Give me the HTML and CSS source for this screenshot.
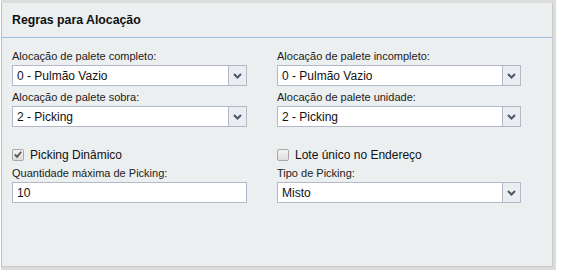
FILE: index.html
```html
<!DOCTYPE html>
<html>
<head>
<meta charset="utf-8">
<link rel="stylesheet" href="styles.css">
</head>
<body>
<div class="frame">
  <div class="panel">
    <div class="panel-header">Regras para Alocação</div>
    <div class="panel-body">
      <div class="grid">
        <div class="field">
          <label class="lbl">Alocação de palete completo:</label>
          <div class="select"><span class="val">0 - Pulmão Vazio</span><span class="arrow"><svg width="9" height="6" viewBox="0 0 9 6"><path d="M1 1 L4.5 4.5 L8 1" fill="none" stroke="#4a5866" stroke-width="2"/></svg></span></div>
        </div>
        <div class="field">
          <label class="lbl">Alocação de palete incompleto:</label>
          <div class="select"><span class="val">0 - Pulmão Vazio</span><span class="arrow"><svg width="9" height="6" viewBox="0 0 9 6"><path d="M1 1 L4.5 4.5 L8 1" fill="none" stroke="#4a5866" stroke-width="2"/></svg></span></div>
        </div>
        <div class="field">
          <label class="lbl">Alocação de palete sobra:</label>
          <div class="select"><span class="val">2 - Picking</span><span class="arrow"><svg width="9" height="6" viewBox="0 0 9 6"><path d="M1 1 L4.5 4.5 L8 1" fill="none" stroke="#4a5866" stroke-width="2"/></svg></span></div>
        </div>
        <div class="field">
          <label class="lbl">Alocação de palete unidade:</label>
          <div class="select"><span class="val">2 - Picking</span><span class="arrow"><svg width="9" height="6" viewBox="0 0 9 6"><path d="M1 1 L4.5 4.5 L8 1" fill="none" stroke="#4a5866" stroke-width="2"/></svg></span></div>
        </div>
      </div>
      <div class="grid second">
        <div class="field">
          <div class="check"><span class="box"><svg width="11" height="11" viewBox="0 0 11 11"><path d="M2 5.5 L4.5 8 L9 2.5" fill="none" stroke="#555" stroke-width="2"/></svg></span><span class="ctext">Picking Dinâmico</span></div>
          <label class="lbl">Quantidade máxima de Picking:</label>
          <div class="input">10</div>
        </div>
        <div class="field">
          <div class="check"><span class="box"></span><span class="ctext">Lote único no Endereço</span></div>
          <label class="lbl">Tipo de Picking:</label>
          <div class="select"><span class="val">Misto</span><span class="arrow"><svg width="9" height="6" viewBox="0 0 9 6"><path d="M1 1 L4.5 4.5 L8 1" fill="none" stroke="#4a5866" stroke-width="2"/></svg></span></div>
        </div>
      </div>
    </div>
  </div>
</div>
</body>
</html>
```
FILE: styles.css
```css
* { box-sizing: border-box; }
html, body { margin: 0; padding: 0; background: #fff; }
body { font-family: "Liberation Sans", Arial, sans-serif; color: #222; padding-left: 1px; }
.frame {
  width: 555px;
  height: 270px;
  background: #dcdcdc;
  padding: 3px 3px 3px 0;
}
.panel {
  height: 100%;
  background: #ebeff0;
  border-left: 1px solid #a9c4e6;
  border-right: 1px solid #c9cccf;
  border-bottom: 1px solid #c9cccf;
}
.panel-header {
  height: 35px;
  border-bottom: 1px solid #9fbfe3;
  font-weight: bold;
  font-size: 12.3px;
  padding: 10px 0 0 10px;
  color: #111;
}
.panel-body { padding: 9px 0 0 10px; }
.grid {
  display: grid;
  grid-template-columns: 235px 244px;
  column-gap: 30px;
  row-gap: 2px;
}
.second { margin-top: 18px; }
.field { display: flex; flex-direction: column; }
.lbl {
  font-size: 11px;
  height: 18px;
  line-height: 16px;
  padding-top: 1px;
  color: #222;
  display: block;
}
.select, .input {
  height: 21px;
  background: #fff;
  border: 1px solid #b5b8c8;
  display: flex;
  align-items: center;
  font-size: 12px;
  color: #111;
}
.val, .input { padding-left: 4px; }
.val { flex: 1; }
.arrow {
  width: 18px;
  height: 100%;
  border-left: 1px solid #b5b8c8;
  background: #ebeef0;
  display: flex;
  align-items: center;
  justify-content: center;
}
.check {
  display: flex;
  align-items: center;
  height: 19px;
  font-size: 12px;
  color: #111;
}
.box {
  width: 12px;
  height: 12px;
  border: 1px solid #a8a8a8;
  border-radius: 2px;
  background: linear-gradient(#f4f4f4, #dedede);
  margin-right: 6px;
  display: flex;
  align-items: center;
  justify-content: center;
}
```
